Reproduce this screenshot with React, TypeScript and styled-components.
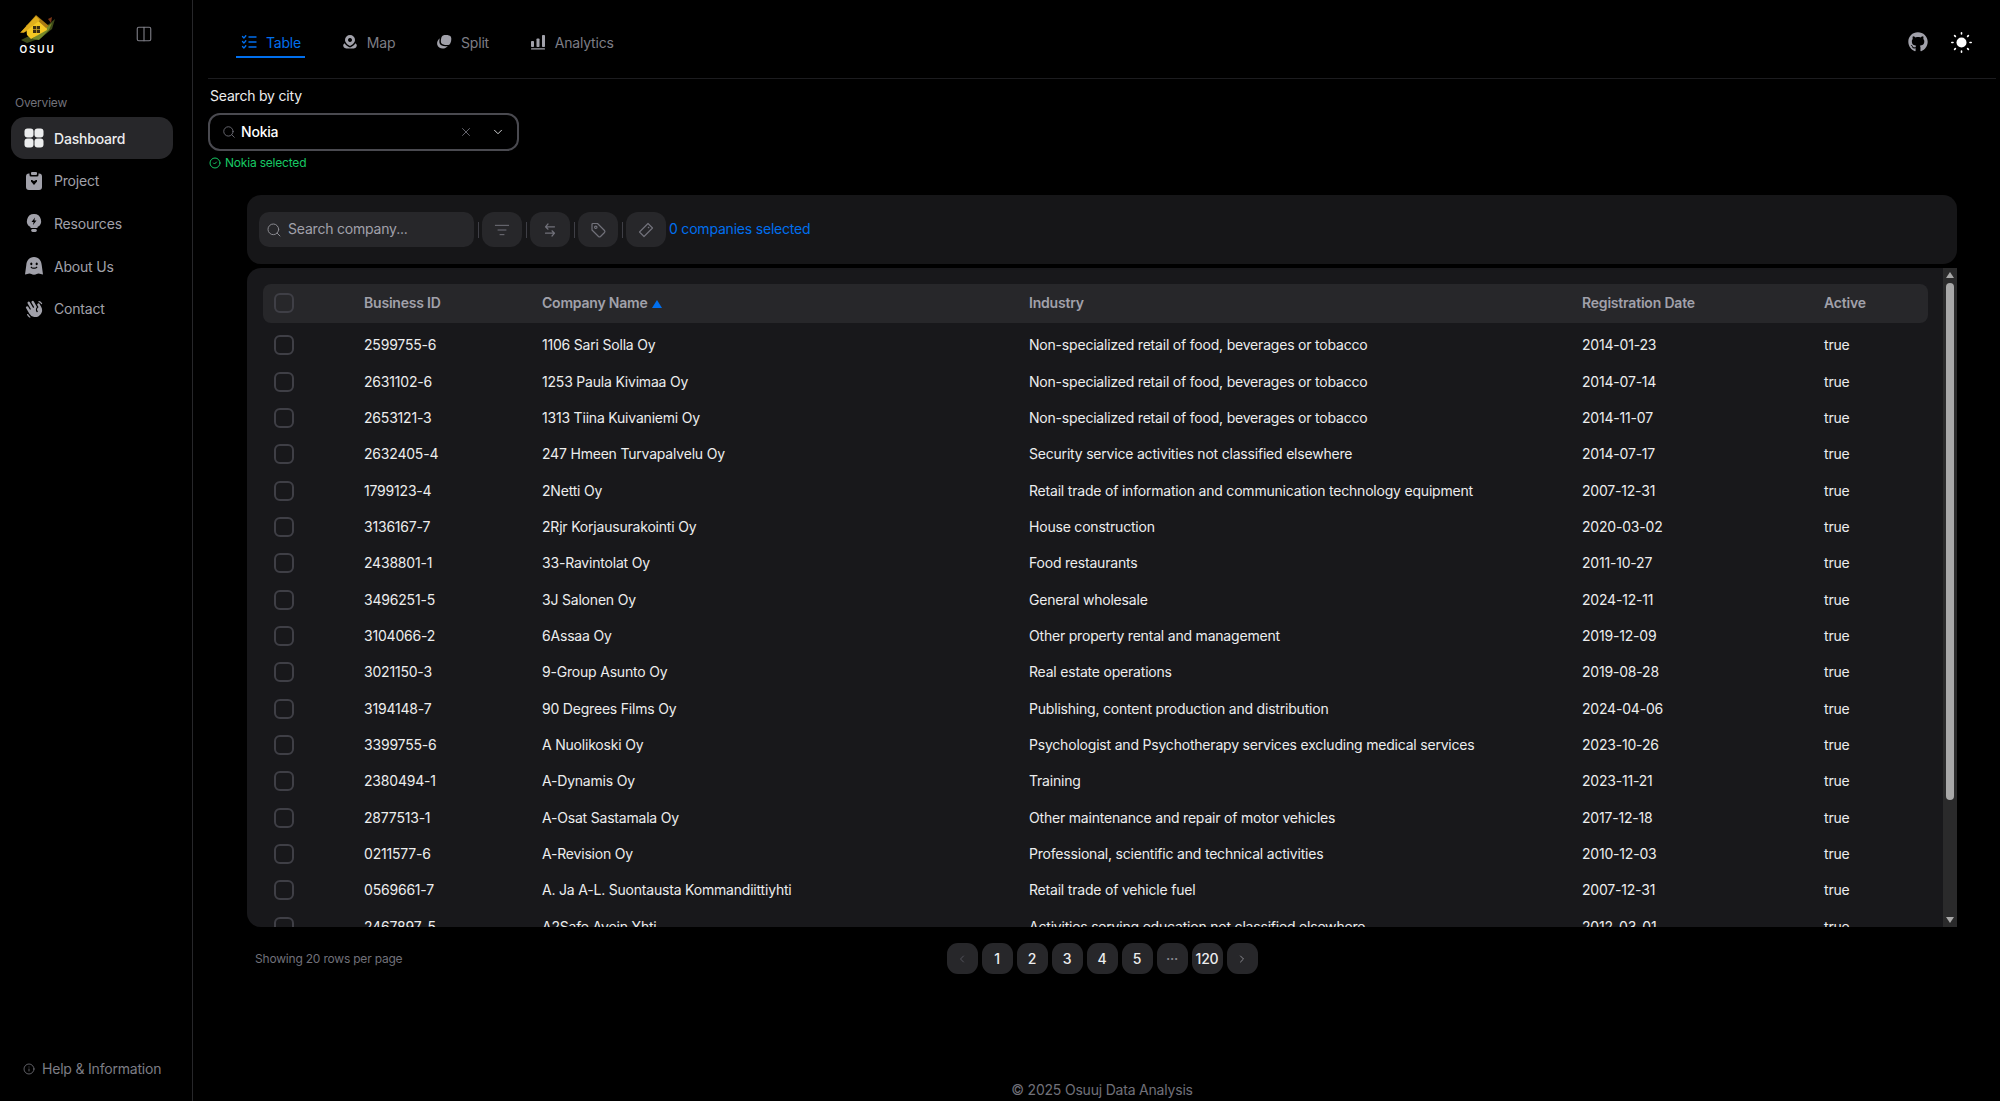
import React from "react";
import styled, { createGlobalStyle } from "styled-components";
import {
  ChevronDown,
  ChevronLeft,
  ChevronRight,
  CircleCheck,
  Columns2,
  Info,
  ListFilter,
  Search,
  X,
} from "lucide-react";
import { FaGithub } from "react-icons/fa";
import { PiHandWavingFill } from "react-icons/pi";

const rows = [
  ["2599755-6", "1106 Sari Solla Oy", "Non-specialized retail of food, beverages or tobacco", "2014-01-23"],
  ["2631102-6", "1253 Paula Kivimaa Oy", "Non-specialized retail of food, beverages or tobacco", "2014-07-14"],
  ["2653121-3", "1313 Tiina Kuivaniemi Oy", "Non-specialized retail of food, beverages or tobacco", "2014-11-07"],
  ["2632405-4", "247 Hmeen Turvapalvelu Oy", "Security service activities not classified elsewhere", "2014-07-17"],
  ["1799123-4", "2Netti Oy", "Retail trade of information and communication technology equipment", "2007-12-31"],
  ["3136167-7", "2Rjr Korjausurakointi Oy", "House construction", "2020-03-02"],
  ["2438801-1", "33-Ravintolat Oy", "Food restaurants", "2011-10-27"],
  ["3496251-5", "3J Salonen Oy", "General wholesale", "2024-12-11"],
  ["3104066-2", "6Assaa Oy", "Other property rental and management", "2019-12-09"],
  ["3021150-3", "9-Group Asunto Oy", "Real estate operations", "2019-08-28"],
  ["3194148-7", "90 Degrees Films Oy", "Publishing, content production and distribution", "2024-04-06"],
  ["3399755-6", "A Nuolikoski Oy", "Psychologist and Psychotherapy services excluding medical services", "2023-10-26"],
  ["2380494-1", "A-Dynamis Oy", "Training", "2023-11-21"],
  ["2877513-1", "A-Osat Sastamala Oy", "Other maintenance and repair of motor vehicles", "2017-12-18"],
  ["0211577-6", "A-Revision Oy", "Professional, scientific and technical activities", "2010-12-03"],
  ["0569661-7", "A. Ja A-L. Suontausta Kommandiittiyhti", "Retail trade of vehicle fuel", "2007-12-31"],
  ["2467897-5", "A2Safe Avoin Yhti", "Activities serving education not classified elsewhere", "2012-03-01"],
];

const GlobalStyle = createGlobalStyle`
  html, body {
    margin: 0;
    padding: 0;
    background: #000;
    overflow: hidden;
  }
  body {
    font-family: Inter, "Noto Sans", sans-serif;
    font-size: 14px;
    letter-spacing: -0.2px;
    color: #ecedee;
  }
  * {
    box-sizing: border-box;
  }
`;

const Shell = styled.div`
  display: flex;
  width: 2000px;
  height: 1101px;
  background: #000;
`;

const Sidebar = styled.aside`
  flex: none;
  width: 193px;
  height: 100%;
  display: flex;
  flex-direction: column;
  border-right: 1px solid #27272a;
  padding-top: 15px;
`;

const BrandRow = styled.div`
  display: flex;
  justify-content: space-between;
  align-items: flex-start;
  padding: 0 39px 0 19px;
  height: 40px;
  color: #7d7d85;
  svg.toggle {
    margin-top: 10px;
  }
`;

const Logo = styled.div`
  display: flex;
  flex-direction: column;
  align-items: center;
  width: 37px;
  svg {
    display: block;
  }
`;

const LogoWord = styled.span`
  font-size: 10px;
  line-height: 11px;
  font-weight: 600;
  letter-spacing: 1.8px;
  color: #fff;
  margin-top: 1px;
`;

const SectionLabel = styled.div`
  font-size: 12px;
  line-height: 16px;
  color: #71717a;
  margin: 40px 0 6px 15px;
`;

const NavItem = styled.div<{ $active?: boolean }>`
  display: flex;
  align-items: center;
  gap: 10px;
  width: 162px;
  height: 42px;
  margin: 0 0 0.7px 11px;
  padding-left: 13px;
  border-radius: 14px;
  background: ${(p) => (p.$active ? "#27272a" : "transparent")};
  color: ${(p) => (p.$active ? "#ecedee" : "#a1a1aa")};
  font-weight: ${(p) => (p.$active ? 500 : 400)};
  svg {
    flex: none;
  }
`;

const HelpLink = styled.div`
  margin-top: auto;
  display: flex;
  align-items: center;
  gap: 7px;
  padding: 0 0 22px 23px;
  line-height: 20px;
  color: #7d7d85;
`;

const Main = styled.main`
  flex: 1;
  min-width: 0;
  display: flex;
  flex-direction: column;
  padding: 0 4px 1px 15px;
`;

const TopBar = styled.header`
  flex: none;
  height: 79px;
  display: flex;
  justify-content: space-between;
  align-items: center;
  border-bottom: 1px solid #1c1c1f;
`;

const Tabs = styled.nav`
  display: flex;
  gap: 31.8px;
  margin-left: 28px;
  align-self: flex-start;
  margin-top: 20px;
`;

const Tab = styled.div<{ $active?: boolean }>`
  display: flex;
  align-items: center;
  gap: 9px;
  height: 38px;
  padding: 8px 4px 0 5px;
  color: ${(p) => (p.$active ? "#006fee" : "#7d7d85")};
  border-bottom: 2px solid ${(p) => (p.$active ? "#006fee" : "transparent")};
  svg {
    color: ${(p) => (p.$active ? "#006fee" : "#a1a1aa")};
  }
`;

const TopActions = styled.div`
  display: flex;
  align-items: center;
  gap: 23px;
  margin-right: 24px;
  margin-top: 6px;
  color: #a1a1aa;
`;

const CitySearch = styled.section`
  flex: none;
  display: flex;
  flex-direction: column;
  align-items: flex-start;
  padding-top: 7px;
`;

const CityLabel = styled.label`
  line-height: 20px;
  color: #ecedee;
  margin: 0 0 7px 2px;
`;

const ComboBox = styled.div`
  width: 311px;
  height: 38px;
  display: flex;
  align-items: center;
  padding: 0 12px;
  border: 2px solid #4a4a50;
  border-radius: 12px;
  color: #71717a;
`;

const ComboValue = styled.span`
  flex: 1;
  font-weight: 500;
  color: #fff;
  margin-left: 5px;
  padding-bottom: 1px;
`;

const ComboChevron = styled(ChevronDown)`
  color: #ecedee;
  margin-left: 18px;
`;

const Helper = styled.div`
  display: flex;
  align-items: center;
  gap: 4px;
  margin-top: 4px;
  padding-left: 1px;
  font-size: 12px;
  line-height: 16px;
  color: #17c964;
`;

const Content = styled.section`
  flex: none;
  margin: 24px 39px 0;
`;

const Toolbar = styled.div`
  height: 69px;
  display: flex;
  align-items: center;
  padding: 0 12px;
  background: #161618;
  border-radius: 14px;
`;

const SearchBox = styled.div`
  width: 215px;
  height: 35px;
  display: flex;
  align-items: center;
  gap: 6px;
  padding: 0 0 2px 7px;
  border-radius: 10px;
  background: #27272a;
  color: #a1a1aa;
  svg {
    color: #8a8a90;
    margin-top: 2px;
  }
`;

const Divider = styled.span`
  flex: none;
  width: 1px;
  height: 16px;
  margin: 0 3.5px;
  background: #3f3f46;
`;

const ToolButton = styled.div`
  flex: none;
  width: 40px;
  height: 35px;
  display: flex;
  align-items: center;
  justify-content: center;
  border-radius: 12px;
  background: #27272a;
  color: #71717a;
`;

const SelectedCount = styled.span`
  margin-left: 3px;
  padding-bottom: 2px;
  color: #006fee;
`;

const TablePanel = styled.div`
  height: 659px;
  margin-top: 4px;
  display: flex;
  background: #18181b;
  border-radius: 14px 0 0 14px;
  overflow: hidden;
`;

const TableBody = styled.div`
  flex: 1;
  min-width: 0;
  padding: 16px 15px 0 16px;
  overflow: hidden;
`;

const Row = styled.div`
  display: grid;
  grid-template-columns: 101px 178px 487px 553px 242px 104px;
  align-items: center;
  height: 36.35px;
  line-height: 20px;
  white-space: nowrap;
  color: #ecedee;
`;

const HeadRow = styled(Row)`
  height: 38.5px;
  margin-bottom: 4.5px;
  border-radius: 8px;
  background: #27272a;
  color: #a1a1aa;
  font-weight: 600;
`;

const CheckBox = styled.span`
  display: block;
  width: 20px;
  height: 20px;
  margin-left: 11px;
  border: 2px solid #3f3f46;
  border-radius: 6px;
`;

const SortMark = styled.span`
  display: inline-block;
  margin-left: 4px;
  width: 0;
  height: 0;
  border-left: 5px solid transparent;
  border-right: 5px solid transparent;
  border-bottom: 8px solid #006fee;
`;

const ScrollTrack = styled.div`
  flex: none;
  width: 14px;
  display: flex;
  flex-direction: column;
  align-items: center;
  background: #2a2a2b;
`;

const ScrollArrow = styled.span<{ $down?: boolean }>`
  flex: none;
  width: 0;
  height: 0;
  margin: ${(p) => (p.$down ? "auto 0 4px" : "4px 0 0")};
  border-left: 4.5px solid transparent;
  border-right: 4.5px solid transparent;
  border-${(p) => (p.$down ? "top" : "bottom")}: 6px solid #a8a8a8;
`;

const ScrollThumb = styled.span`
  flex: none;
  width: 8px;
  height: 517px;
  margin-top: 5px;
  border-radius: 4px;
  background: #a8a8a8;
`;

const PagerRow = styled.div`
  display: grid;
  grid-template-columns: 1fr auto 1fr;
  align-items: center;
  margin-top: 16px;
`;

const RowsNote = styled.span`
  padding-left: 8px;
  font-size: 12px;
  color: #71717a;
`;

const Pager = styled.div`
  display: flex;
  gap: 4px;
`;

const PageButton = styled.div<{ $muted?: boolean }>`
  width: 31px;
  height: 31px;
  display: flex;
  align-items: center;
  justify-content: center;
  border-radius: 11px;
  background: #27272a;
  font-weight: 500;
  color: ${(p) => (p.$muted ? "#8a8a90" : "#ecedee")};
`;

const Footer = styled.footer`
  margin-top: auto;
  text-align: center;
  line-height: 20px;
  color: #71717a;
`;

const HouseLogo = () => (
  <svg width="37" height="28" viewBox="0 0 37 28">
    <path d="M2 25 L12 20 L30 9 L36 4 L33 14 L22 23 L8 28 Z" fill="#3d4a18" />
    <path d="M13 24 L33 8 L30 15 L20 25 Z" fill="#76892a" />
    <path d="M7 11 L18 2 L27 10 L28 15 L12 24 L8 20 Z" fill="#f5c823" />
    <path d="M1 18 L17 0 L30 11 L27 13 L17 4 L5 18 Z" fill="#a87a12" />
    <path d="M2 17 L17 1 L21 5 L6 17 Z" fill="#e0ae1c" />
    <rect x="14" y="11" width="7" height="7" fill="#3a2c10" />
    <path d="M17.5 11 V18 M14 14.5 H21" stroke="#c8a22a" strokeWidth="0.8" />
    <path d="M29 4 L33 2 L32 8 Z" fill="#7a3416" />
  </svg>
);

const WidgetIcon = () => (
  <svg width="20" height="20" viewBox="0 0 20 20" fill="currentColor">
    <rect x="0.5" y="0.5" width="9" height="9" rx="3" />
    <rect x="10.5" y="0.5" width="9" height="9" rx="3" />
    <rect x="0.5" y="10.5" width="9" height="9" rx="3" />
    <rect x="10.5" y="10.5" width="9" height="9" rx="3" />
  </svg>
);

const ClipboardIcon = () => (
  <svg width="20" height="20" viewBox="0 0 20 20" fill="currentColor">
    <path
      fillRule="evenodd"
      d="M5.5 2.5 H5 A3 3 0 0 0 2 5.5 V16 A3 3 0 0 0 5 19 H15 A3 3 0 0 0 18 16 V5.5 A3 3 0 0 0 15 2.5 H14.5 V4 A1.5 1.5 0 0 1 13 5.5 H7 A1.5 1.5 0 0 1 5.5 4 Z M7 9 C8 9 9.3 9.6 10 10.2 C10.7 9.6 12 9 13 9 L13 10.5 L10 14 L7 10.5 Z"
    />
    <rect x="7" y="1" width="6" height="3" rx="1" />
  </svg>
);

const BulbIcon = () => (
  <svg width="20" height="20" viewBox="0 0 20 20" fill="currentColor">
    <path
      fillRule="evenodd"
      d="M10 1 A7 7 0 0 0 6.5 14.1 V15 H13.5 V14.1 A7 7 0 0 0 10 1 Z M11 4.5 L7.5 9 H9.6 L9 12 L12.5 7.5 H10.4 Z"
    />
    <rect x="7.2" y="16" width="5.6" height="3" rx="1.4" />
  </svg>
);

const GhostIcon = () => (
  <svg width="20" height="20" viewBox="0 0 20 20" fill="currentColor">
    <path
      fillRule="evenodd"
      d="M10 1 C5 1 2.6 5 2.3 9 L1 18.5 C3 18.5 3.5 17.6 5.5 17.6 C7 17.6 7.5 18.8 10 18.8 C12.5 18.8 13 17.6 14.5 17.6 C16.5 17.6 17 18.5 19 18.5 L17.7 9 C17.4 5 15 1 10 1 Z M7.3 6.5 A1.1 1.4 0 1 0 7.31 6.5 Z M12.7 6.5 A1.1 1.4 0 1 0 12.71 6.5 Z M6.5 11.2 C8 13.4 12 13.4 13.5 11.2 L12.7 10.6 C11.5 12.2 8.5 12.2 7.3 10.6 Z"
    />
  </svg>
);

const ChecklistIcon = () => (
  <svg width="16" height="16" viewBox="0 0 16 16" fill="none" stroke="currentColor" strokeWidth="1.4" strokeLinecap="round" strokeLinejoin="round">
    <path d="M8 3 H15 M8 8 H15 M8 13 H15" />
    <path d="M1.5 2.5 L3 4 L5 1.5 M1.5 7.5 L3 9 L5 6.5 M1.5 12.5 L3 14 L5 11.5" strokeDasharray="2 1" />
  </svg>
);

const MapPointIcon = () => (
  <svg width="16" height="16" viewBox="0 0 16 16" fill="currentColor">
    <path
      fillRule="evenodd"
      d="M8 1 A5 5 0 0 0 3 6 C3 8.8 6 11 8 12 C10 11 13 8.8 13 6 A5 5 0 0 0 8 1 Z M8 4 A2 2 0 1 0 8.01 4 Z"
    />
    <path d="M2.6 9.2 C0.8 10.4 0.8 12 2 13.4 C3.4 15 12.6 15 14 13.4 C15.2 12 15.2 10.4 13.4 9.2 C12.6 10.8 10 12.6 8 13.4 C6 12.6 3.4 10.8 2.6 9.2 Z" />
  </svg>
);

const LayersIcon = () => (
  <svg width="16" height="16" viewBox="0 0 16 16" fill="currentColor">
    <path d="M7 1.5 C9.5 0.5 14 1 15 3 C15.8 5 15 9 13.5 10.5 C12.5 11.3 6.5 11.5 5.2 9 C4.4 7 5 2.5 7 1.5 Z" />
    <path d="M3.8 4.2 C2 5.4 0.6 8 1.2 10.5 C1.8 13.2 5 15 7.5 14.5 C9.5 14.2 11 13.2 11.8 12 C9 12.6 4.8 12.4 3.7 9.6 C3.2 8 3.3 5.8 3.8 4.2 Z" />
  </svg>
);

const ChartIcon = () => (
  <svg width="16" height="16" viewBox="0 0 16 16" fill="currentColor">
    <rect x="1" y="7" width="3" height="6" rx="0.8" />
    <rect x="6.5" y="4.5" width="3" height="8.5" rx="0.8" />
    <rect x="12" y="1" width="3" height="12" rx="0.8" />
    <rect x="1" y="14.2" width="14" height="1.3" rx="0.6" />
  </svg>
);

const SunIcon = () => (
  <svg width="21" height="21" viewBox="0 0 21 21" fill="#fff">
    <circle cx="10.5" cy="10.5" r="5" />
    <g stroke="#fff" strokeWidth="1.6" strokeLinecap="round">
      <path d="M10.5 0.8 V2 M10.5 19 V20.2 M0.8 10.5 H2 M19 10.5 H20.2 M3.6 3.6 L4.4 4.4 M16.6 16.6 L17.4 17.4 M3.6 17.4 L4.4 16.6 M16.6 4.4 L17.4 3.6" />
    </g>
  </svg>
);

const SwapIcon = () => (
  <svg width="12" height="14" viewBox="0 0 12 14" fill="none" stroke="currentColor" strokeWidth="1.2" strokeLinecap="round" strokeLinejoin="round">
    <path d="M4 1 L1.5 3.8 L4 6.2 M1.5 3.8 H10.5" />
    <path d="M8 7.8 L10.5 10.2 L8 13 M10.5 10.2 H1.5" />
  </svg>
);

const PriceTagIcon = () => (
  <svg width="18" height="18" viewBox="0 0 18 18" fill="none" stroke="currentColor" strokeWidth="1.2" strokeLinejoin="round">
    <path d="M3 3.5 A1 1 0 0 1 4 2.5 H8.5 L15.5 9.5 A1.5 1.5 0 0 1 15.5 11.5 L11.5 15.5 A1.5 1.5 0 0 1 9.5 15.5 L3 9 Z" />
    <circle cx="6.8" cy="6.3" r="1.2" />
  </svg>
);

const TicketIcon = () => (
  <svg width="18" height="18" viewBox="0 0 18 18" fill="none" stroke="currentColor" strokeWidth="1.2" strokeLinejoin="round">
    <path d="M11 2.5 L15.5 7 L7 15.5 L2.5 11 Z" />
    <path d="M11 7 L12.2 5.8" />
  </svg>
);

const navItems = [
  { label: "Dashboard", icon: <WidgetIcon />, active: true },
  { label: "Project", icon: <ClipboardIcon /> },
  { label: "Resources", icon: <BulbIcon /> },
  { label: "About Us", icon: <GhostIcon /> },
  { label: "Contact", icon: <PiHandWavingFill size={20} /> },
];

const tabs = [
  { label: "Table", icon: <ChecklistIcon />, active: true },
  { label: "Map", icon: <MapPointIcon /> },
  { label: "Split", icon: <LayersIcon /> },
  { label: "Analytics", icon: <ChartIcon /> },
];

const App = (): JSX.Element => {
  return (
    <Shell>
      <GlobalStyle />
      <Sidebar>
        <BrandRow>
          <Logo>
            <HouseLogo />
            <LogoWord>OSUU</LogoWord>
          </Logo>
          <Columns2 className="toggle" size={18} strokeWidth={1.5} />
        </BrandRow>
        <SectionLabel>Overview</SectionLabel>
        {navItems.map((item) => (
          <NavItem key={item.label} $active={item.active}>
            {item.icon}
            {item.label}
          </NavItem>
        ))}
        <HelpLink>
          <Info size={12} strokeWidth={1.5} />
          Help &amp; Information
        </HelpLink>
      </Sidebar>

      <Main>
        <TopBar>
          <Tabs>
            {tabs.map((tab) => (
              <Tab key={tab.label} $active={tab.active}>
                {tab.icon}
                {tab.label}
              </Tab>
            ))}
          </Tabs>
          <TopActions>
            <FaGithub size={20} />
            <SunIcon />
          </TopActions>
        </TopBar>

        <CitySearch>
          <CityLabel>Search by city</CityLabel>
          <ComboBox>
            <Search size={14} strokeWidth={1.5} />
            <ComboValue>Nokia</ComboValue>
            <X size={14} strokeWidth={1.5} />
            <ComboChevron size={14} strokeWidth={1.5} />
          </ComboBox>
          <Helper>
            <CircleCheck size={12} />
            Nokia selected
          </Helper>
        </CitySearch>

        <Content>
          <Toolbar>
            <SearchBox>
              <Search size={16} strokeWidth={1.5} />
              Search company...
            </SearchBox>
            <Divider />
            <ToolButton>
              <ListFilter size={16} strokeWidth={1.5} />
            </ToolButton>
            <Divider />
            <ToolButton>
              <SwapIcon />
            </ToolButton>
            <Divider />
            <ToolButton>
              <PriceTagIcon />
            </ToolButton>
            <Divider />
            <ToolButton>
              <TicketIcon />
            </ToolButton>
            <SelectedCount>0 companies selected</SelectedCount>
          </Toolbar>

          <TablePanel>
            <TableBody>
              <HeadRow>
                <CheckBox />
                <span>Business ID</span>
                <span>
                  Company Name
                  <SortMark />
                </span>
                <span>Industry</span>
                <span>Registration Date</span>
                <span>Active</span>
              </HeadRow>
              {rows.map(([id, name, industry, date]) => (
                <Row key={id}>
                  <CheckBox />
                  <span>{id}</span>
                  <span>{name}</span>
                  <span>{industry}</span>
                  <span>{date}</span>
                  <span>true</span>
                </Row>
              ))}
            </TableBody>
            <ScrollTrack>
              <ScrollArrow />
              <ScrollThumb />
              <ScrollArrow $down />
            </ScrollTrack>
          </TablePanel>

          <PagerRow>
            <RowsNote>Showing 20 rows per page</RowsNote>
            <Pager>
              <PageButton $muted>
                <ChevronLeft size={12} color="#52525b" />
              </PageButton>
              {["1", "2", "3", "4", "5"].map((page) => (
                <PageButton key={page}>{page}</PageButton>
              ))}
              <PageButton $muted>···</PageButton>
              <PageButton>120</PageButton>
              <PageButton $muted>
                <ChevronRight size={12} />
              </PageButton>
            </Pager>
          </PagerRow>
        </Content>

        <Footer>© 2025 Osuuj Data Analysis</Footer>
      </Main>
    </Shell>
  );
};

export default App;
